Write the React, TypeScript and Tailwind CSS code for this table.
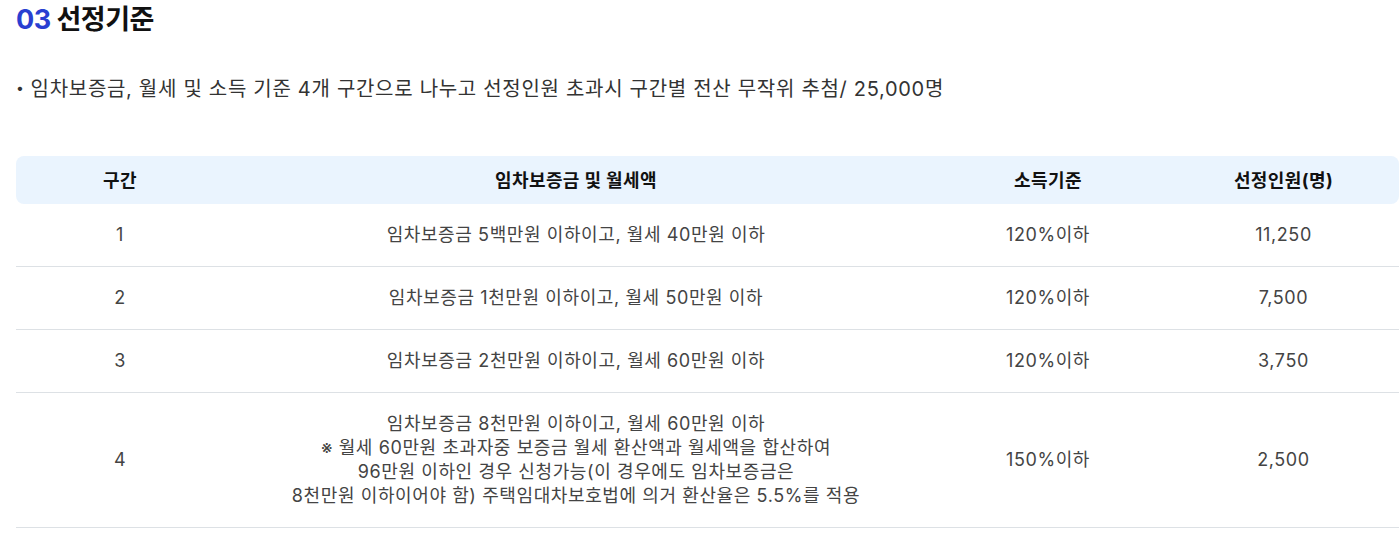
import React from "react";

const rows = [
  { no: "1", cond: ["임차보증금 5백만원 이하이고, 월세 40만원 이하"], income: "120%이하", count: "11,250" },
  { no: "2", cond: ["임차보증금 1천만원 이하이고, 월세 50만원 이하"], income: "120%이하", count: "7,500" },
  { no: "3", cond: ["임차보증금 2천만원 이하이고, 월세 60만원 이하"], income: "120%이하", count: "3,750" },
  {
    no: "4",
    cond: [
      "임차보증금 8천만원 이하이고, 월세 60만원 이하",
      "※ 월세 60만원 초과자중 보증금 월세 환산액과 월세액을 합산하여",
      "96만원 이하인 경우 신청가능(이 경우에도 임차보증금은",
      "8천만원 이하이어야 함) 주택임대차보호법에 의거 환산율은 5.5%를 적용",
    ],
    income: "150%이하",
    count: "2,500",
  },
];

export default function App() {
  return (
    <div
      className="bg-white w-[1399px] h-[534px] overflow-hidden pl-4"
      style={{ fontFamily: 'Inter, "Noto Sans CJK KR", sans-serif' }}
    >
      <h2 className="pt-[3px] text-[27px] leading-[34px] font-bold text-[#111] tracking-[-0.5px]">
        <span className="text-[#2a3fd1]">03</span> 선정기준
      </h2>
      <p className="mt-[36px] text-[20px] leading-[30px] text-[#333] tracking-[0.7px]">
        <span className="text-[14px] align-[3px] mr-[6px]">•</span>임차보증금, 월세 및 소득 기준 4개 구간으로 나누고 선정인원 초과시 구간별 전산 무작위 추첨/ 25,000명
      </p>
      <div className="mt-[52px] w-[1383px]">
        <div className="flex h-[48px] items-center rounded-[8px] bg-[#eaf4fe] text-[18px] font-bold text-[#111] tracking-[0.4px]">
          <div className="w-[208px] text-center">구간</div>
          <div className="w-[704px] text-center">임차보증금 및 월세액</div>
          <div className="w-[240px] text-center">소득기준</div>
          <div className="w-[231px] text-center">선정인원(명)</div>
        </div>
        {rows.map((r) => (
          <div
            key={r.no}
            className={`flex items-center border-b border-[#dde1e5] text-[18px] leading-[24px] text-[#444] tracking-[0.6px] ${
              r.cond.length > 1 ? "py-[19px]" : "py-[19px]"
            }`}
          >
            <div className="w-[208px] text-center">{r.no}</div>
            <div className="w-[704px] text-center">
              {r.cond.map((c, i) => (
                <div key={i}>{c}</div>
              ))}
            </div>
            <div className="w-[240px] text-center">{r.income}</div>
            <div className="w-[231px] text-center">{r.count}</div>
          </div>
        ))}
      </div>
    </div>
  );
}
